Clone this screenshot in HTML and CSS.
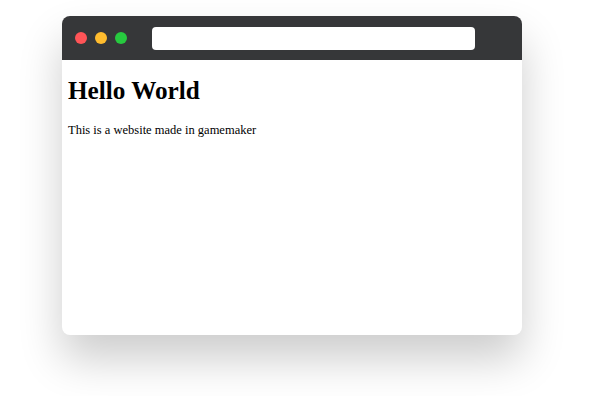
FILE: index.html
```html
<!DOCTYPE html>
<html lang="en">
<head>
    <meta charset="UTF-8">
    <meta name="viewport" content="width=device-width, initial-scale=1.0">
    <title>Browser Mockup</title>
    <link rel="stylesheet" href="styles.css">
</head>
<body>
    <div class="stage">
        <div class="browser">
            <!-- Title bar -->
            <div class="browser-bar">
                <div class="dots">
                    <span class="dot dot-red"></span>
                    <span class="dot dot-yellow"></span>
                    <span class="dot dot-green"></span>
                </div>
                <div class="address-bar"></div>
            </div>

            <!-- Page content -->
            <div class="browser-content">
                <h1>Hello World</h1>
                <p>This is a website made in gamemaker</p>
            </div>
        </div>
    </div>
</body>
</html>
```

FILE: styles.css
```css
html,
body {
    margin: 0;
    background-color: #ffffff;
}

.stage {
    height: 396px;
    padding: 16px 0 0 62px;
    box-sizing: border-box;
}

.browser {
    width: 460px;
    border-radius: 8px;
    background: white;
    box-shadow: 0 24px 44px rgba(0, 0, 0, 0.2);
    overflow: hidden;
}

.browser-bar {
    height: 44px;
    background-color: #363739;
    display: flex;
    align-items: center;
    padding-left: 13px;
}

.dots {
    display: flex;
    gap: 8px;
}

.dot {
    width: 12px;
    height: 12px;
    border-radius: 50%;
}

.dot-red {
    background-color: #ff5457;
}

.dot-yellow {
    background-color: #ffbc2e;
}

.dot-green {
    background-color: #27c93f;
}

.address-bar {
    width: 323px;
    height: 23px;
    margin-left: 25px;
    background: white;
    border-radius: 4px;
}

.browser-content {
    height: 274px;
    padding: 1px 6px 0;
    font-family: "Liberation Serif", "Times New Roman", serif;
    color: #000;
}

.browser-content h1 {
    font-size: 25.2px;
    margin: 16px 0 18px;
}

.browser-content p {
    font-size: 12.5px;
    margin: 0;
}
```
